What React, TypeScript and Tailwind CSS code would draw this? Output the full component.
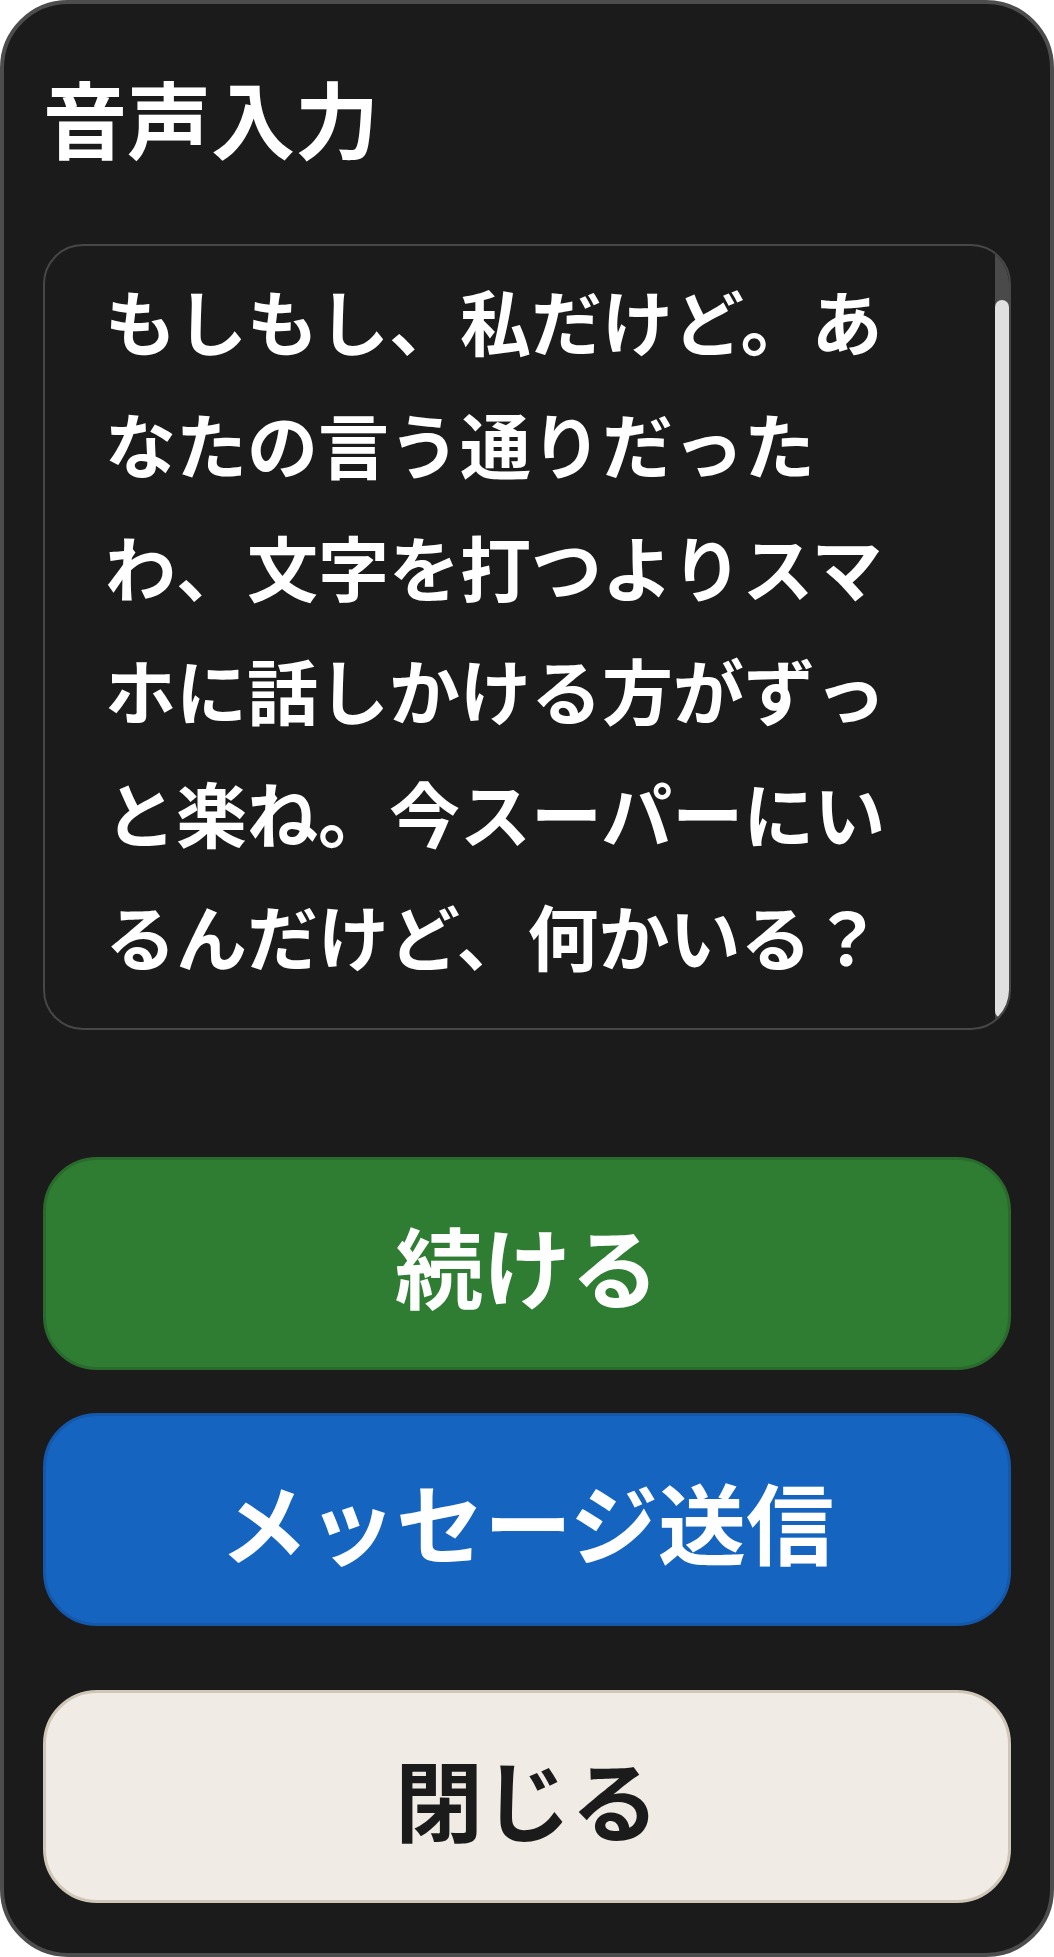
import React, { useEffect, useRef } from "react";

const transcript =
  "もしもし、私だけど。あなたの言う通りだったわ、文字を打つよりスマホに話しかける方がずっと楽ね。今スーパーにいるんだけど、何かいる？";

export default function App() {
  const scrollRef = useRef<HTMLDivElement>(null);

  useEffect(() => {
    // the reference shows the transcript scrolled a little way down
    if (scrollRef.current) scrollRef.current.scrollTop = 60;
  }, []);

  return (
    <div className="w-[1054px] h-[1957px] bg-white font-['Noto_Sans_CJK_JP','Noto_Sans',sans-serif]">
      <div className="flex h-full flex-col rounded-[68px] border-4 border-[#4d4d4d] bg-[#1b1b1b] px-[39px] pt-[70px] pb-[50px]">
        <h1 className="h-[86px] text-[84px] leading-[86px] font-bold text-white">
          音声入力
        </h1>

        <div className="relative mt-[84px] h-[786px] overflow-hidden rounded-[40px] border-2 border-[#474747] bg-[#1b1b1b]">
          <div ref={scrollRef} className="h-full overflow-hidden">
            <p className="pt-[72px] pr-[74px] pb-[48px] pl-[60px] text-[71px] leading-[123px] font-bold text-white">
              {transcript}
            </p>
          </div>
          {/* scrollbar */}
          <div className="absolute top-0 right-0 bottom-0 w-[14px] bg-[#4a4a4a]">
            <div className="absolute top-[54px] right-0 bottom-[10px] left-0 rounded-full bg-[#e0e0e0]" />
          </div>
        </div>

        <div className="mt-[127px] flex flex-col">
          <button className="flex h-[213px] items-center justify-center rounded-[54px] border-[3px] border-[#2a6b2d] bg-[#2e7d32] text-[88px] font-bold text-white">
            続ける
          </button>
          <button className="mt-[43px] flex h-[213px] items-center justify-center rounded-[54px] border-[3px] border-[#1458ab] bg-[#1565c0] text-[88px] font-bold text-white">
            メッセージ送信
          </button>
          <button className="mt-[64px] flex h-[213px] items-center justify-center rounded-[54px] border-[3px] border-[#cfc6b7] bg-[#f0ebe4] text-[88px] font-bold text-[#1b1b1b]">
            閉じる
          </button>
        </div>
      </div>
    </div>
  );
}
